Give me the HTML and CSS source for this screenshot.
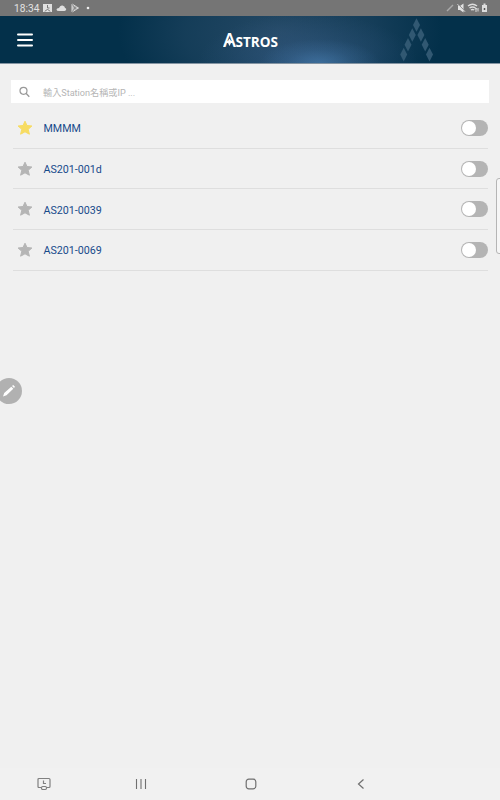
FILE: index.html
```html
<!DOCTYPE html>
<html lang="zh-Hant">
<head>
<meta charset="utf-8">
<title>Astros</title>
<link rel="stylesheet" href="styles.css">
</head>
<body>
<div class="status">
  <span class="time">18:34</span>
  <svg class="status-left" width="52" height="16" viewBox="0 0 52 16">
    <path d="M0 4h9v8H0z" fill="#e0e0e0"/><path d="M4.500 5v3h2M2 11.500q2.500-4 5 0" fill="none" stroke="#777"/>
    <path d="M16 11q-2.500 0-2.500-1.500T16 8q1-3 3.500-2.500T22 8q1.500.3 1.200 1.600T21.500 11z" fill="#e0e0e0"/>
    <path d="M29 4l6.500 4-6.500 4z" fill="#b5b5b5" stroke="#ddd"/><path d="M29 4l4 5.500M29 12l4-5.500" stroke="#777" stroke-width=".7"/>
    <circle cx="45" cy="8" r="1.300" fill="#eee"/>
  </svg>
  <svg class="status-right" width="44" height="16" viewBox="0 0 44 16">
    <path d="M2 11l6-6" stroke="#aaa" stroke-width="1.500"/>
    <path d="M13 6h2l3.500-2.500v9L15 10h-2z" fill="#e2e2e2"/><path d="M12.500 3.500l8 8" stroke="#737373" stroke-width="1"/><path d="M12.500 4.200l7.500 7.500" stroke="#ddd"/>
    <path d="M23 6q4.500-3.500 9 0M24.500 8q3-2.200 6 0M26 10q1.500-1 3 0" fill="none" stroke="#ddd" stroke-width="1.500"/><path d="M31 12V8.500m-1 1l1-1.500 1 1.500M33 8v3.500" stroke="#ddd" fill="none"/>
    <path d="M37 5h1.500V3.500h2V5H42v7h-5z" fill="#ddd"/><path d="M39.500 8v2" stroke="#555" stroke-width="1.500"/>
  </svg>
</div>
<header class="header">
  <svg class="menu" width="16" height="14" viewBox="0 0 16 14"><path d="M1 1.500h14M1 7h14M1 12.500h14" stroke="#fff" stroke-width="2" stroke-linecap="round"/></svg>
  <svg class="logo" width="60" height="28" viewBox="0 0 60 28">
    <text class="logo-a" x="0" y="20" textLength="13" lengthAdjust="spacingAndGlyphs">A</text>
    <text class="logo-rest" x="12.500" y="20" textLength="42.500" lengthAdjust="spacingAndGlyphs">STROS</text>
    <path d="M6.500 11.500l2 3.300-2 4.200-2-4.200z" fill="#fff"/>
  </svg>
  <svg class="emblem" width="34" height="44" viewBox="0 0 34 44">
    <defs><path id="gem" d="M0-6.800L3.500 0 0 6.800-3.500 0z"/></defs>
    <g fill="#315872"><use href="#gem" x="16.500" y="7"/><use href="#gem" x="12.300" y="17"/><use href="#gem" x="20.900" y="17"/><use href="#gem" x="8" y="26.800"/><use href="#gem" x="25.200" y="26.800"/><use href="#gem" x="3.700" y="36.600"/><use href="#gem" x="29.500" y="36.600"/></g>
  </svg>
</header>
<main class="main">
  <div class="search">
    <svg width="12" height="12" viewBox="0 0 12 12"><circle cx="4.500" cy="4.800" r="3.500" fill="none" stroke="#999" stroke-width="1.200"/><path d="M7 7.300l3.300 3.400" stroke="#999" stroke-width="1.300"/></svg>
    <span>輸入Station名稱或IP ...</span>
  </div>
  <div class="list">
    <div class="row"><svg class="star on" viewBox="0 0 16 16"><path d="M8 1.200l2 4.300 4.900.5-3.700 3.300 1.200 4.900L8 11.800l-4.400 2.400 1.200-4.900L1.100 6l4.900-.5z"/></svg><span class="name">MMMM</span><i class="switch"></i></div>
    <div class="row"><svg class="star" viewBox="0 0 16 16"><path d="M8 1.200l2 4.300 4.900.5-3.700 3.300 1.200 4.900L8 11.800l-4.400 2.400 1.200-4.900L1.100 6l4.900-.5z"/></svg><span class="name">AS201-001d</span><i class="switch"></i></div>
    <div class="row"><svg class="star" viewBox="0 0 16 16"><path d="M8 1.200l2 4.300 4.900.5-3.700 3.300 1.200 4.900L8 11.800l-4.400 2.400 1.200-4.900L1.100 6l4.900-.5z"/></svg><span class="name">AS201-0039</span><i class="switch"></i></div>
    <div class="row"><svg class="star" viewBox="0 0 16 16"><path d="M8 1.200l2 4.300 4.900.5-3.700 3.300 1.200 4.900L8 11.800l-4.400 2.400 1.200-4.900L1.100 6l4.900-.5z"/></svg><span class="name">AS201-0069</span><i class="switch"></i></div>
  </div>
</main>
<nav class="nav">
  <svg width="14" height="14" viewBox="0 0 14 14" fill="none" stroke="#808080" stroke-width="1.200"><path d="M4 10.500H2q-1 0-1-1V2.500q0-1 1-1h10q1 0 1 1v7q0 1-1 1h-2"/><path d="M6.500 3.500v3H9"/><rect x="4.500" y="9.500" width="5" height="3" rx="1.200"/></svg>
  <svg width="12" height="14" viewBox="0 0 12 14"><path d="M1.500 2v10M6 2v10M10.500 2v10" stroke="#707070" stroke-width="1.100"/></svg>
  <svg width="12" height="14" viewBox="0 0 12 14"><rect x="1.200" y="2.200" width="9.600" height="9.600" rx="2.600" fill="none" stroke="#707070" stroke-width="1.200"/></svg>
  <svg width="8" height="14" viewBox="0 0 8 14"><path d="M6.500 2.500L1.500 7l5 4.500" fill="none" stroke="#707070" stroke-width="1.200"/></svg>
</nav>
<div class="edge-handle"></div>
<div class="pen"><svg width="14" height="14" viewBox="0 0 14 14"><path d="M1 12.500l1.200-3.500L9.300 2.700l2 2L4.500 11.300zM10 2l1.200-1 1.800 1.800-1 1.200z" fill="#fff"/></svg></div>
</body>
</html>
```
FILE: styles.css
```css
* { box-sizing: border-box; }
body {
  margin: 0;
  height: 800px;
  position: relative;
  overflow: hidden;
  display: flex;
  flex-direction: column;
  background: #f0f0f0;
  font-family: Roboto, "Noto Sans CJK TC", sans-serif;
}
svg { display: block; flex: none; }
.status {
  height: 16px;
  flex: none;
  display: flex;
  align-items: center;
  padding: 0 11px 0 14px;
  background: #757575;
  color: #e2e2e2;
}
.time { width: 29px; padding-top: 1px; font-size: 10.200px; line-height: 16px; }
.status-right { margin-left: auto; }
.header {
  height: 48px;
  flex: none;
  display: grid;
  grid-template-columns: 206px 177px 1fr;
  padding-left: 17px;
  align-items: start;
  border-bottom: 1px solid #8494a2;
  background:
    radial-gradient(ellipse 60px 24px at 320px 100%, rgba(71, 126, 176, .6), rgba(71, 126, 176, .2) 55%, transparent),
    radial-gradient(ellipse 110px 50px at 308px 100%, rgba(60, 98, 145, .55), rgba(60, 98, 145, .2) 60%, transparent),
    radial-gradient(ellipse 190px 110px at 280px 35%, rgba(54, 86, 116, .65), rgba(54, 86, 116, .35) 50%, transparent 85%),
    #03304a;
}
.menu { margin-top: 17px; }
.logo { margin-top: 11px; fill: #fff; font-family: "Open Sans", sans-serif; font-weight: 700; }
.logo-a { font-size: 19px; font-weight: 600; }
.logo-rest { font-size: 15px; }
.emblem { margin-top: 2px; }
.main { flex: 1; padding: 16px 11px 0; }
.search {
  height: 23px;
  display: flex;
  align-items: center;
  gap: 12px;
  padding-left: 8px;
  background: #fff;
  color: #b5b5b5;
  font-size: 9.150px;
}
.list { padding: 5px 1px 0 2px; }
.row {
  height: 40.700px;
  display: flex;
  align-items: center;
  padding-left: 4px;
  border-bottom: 1px solid #dedede;
}
.star { width: 16px; height: 16px; fill: #b5b5b5; stroke: #b5b5b5; stroke-linejoin: round; }
.star.on { fill: #f7dc62; stroke: #f7dc62; }
.name { margin-left: 10.500px; padding-top: 2px; color: #174a8b; font-size: 10.700px; }
.switch {
  width: 27px;
  height: 16px;
  margin-left: auto;
  border-radius: 8px;
  padding: 1px;
  background: #b4b4b4;
}
.switch::before {
  content: "";
  display: block;
  width: 14px;
  height: 14px;
  border-radius: 50%;
  background: #fff;
}
.nav {
  height: 32px;
  flex: none;
  display: grid;
  grid-template-columns: 98px 110px 111.500px 1fr;
  align-items: center;
  padding-left: 37px;
  background: #f1f1f1;
}
.edge-handle {
  position: absolute;
  left: 496px;
  top: 178px;
  width: 8px;
  height: 76px;
  border: 1px solid #b5b5b5;
  border-radius: 3px;
  background: #f6f6f6;
}
.pen {
  position: absolute;
  left: -4px;
  top: 378px;
  width: 26px;
  height: 26px;
  border-radius: 50%;
  background: #b1b1b1;
  display: grid;
  place-items: center;
}
```
